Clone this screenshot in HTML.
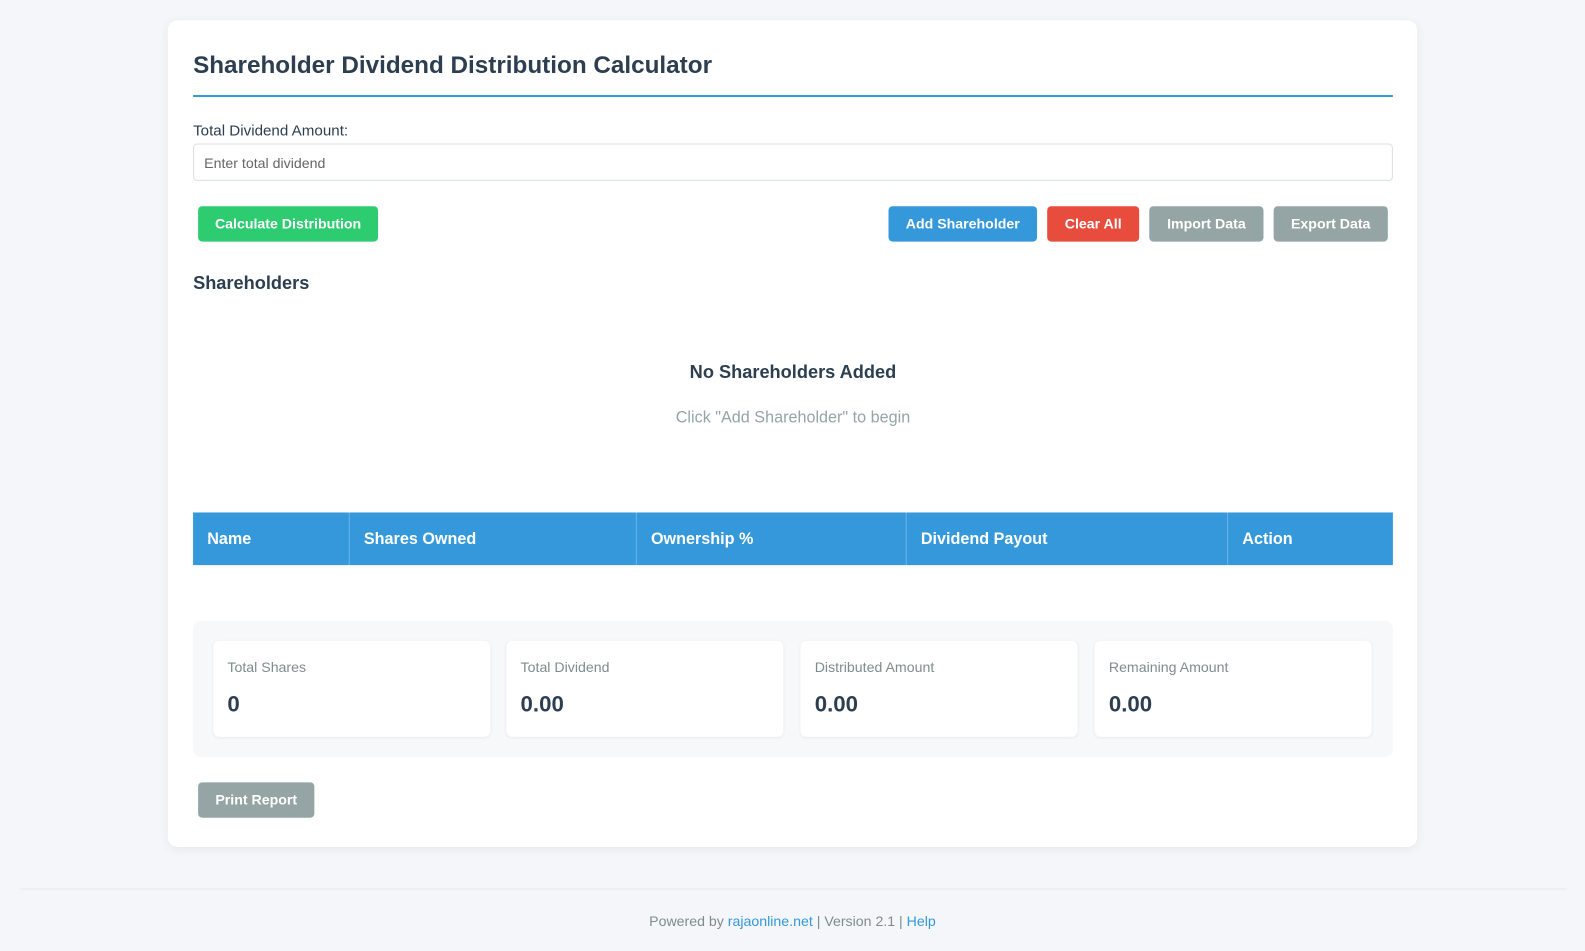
<!DOCTYPE html>
<html><head><meta charset="utf-8"><style>
*{box-sizing:border-box;margin:0;padding:0}
html,body{width:1585px;height:951px;background:#f4f6f9;overflow:hidden}
body{font-family:"Liberation Sans",sans-serif;color:#2c3e50;position:relative}
#w{position:absolute;left:0;top:0;width:1568px;height:941px;transform:scale(1.0108);transform-origin:0 0}
.a{position:absolute}
.card{left:166px;top:20px;width:1236px;height:818px;background:#fff;border-radius:10px;box-shadow:0 2px 10px rgba(0,0,0,.06)}
.btn{position:absolute;top:204px;height:35px;border-radius:4px;color:#fff;font-weight:bold;font-size:14px;text-align:center;line-height:35px}
.th{position:absolute;top:0;height:52px;line-height:54px;color:#fff;font-weight:bold;font-size:16px;padding-left:14px;border-right:1px solid #6fb3e6}
.sc{position:absolute;top:634px;width:274px;height:95px;background:#fff;border-radius:6px;box-shadow:0 1px 3px rgba(0,0,0,.06)}
.sc .l{position:absolute;left:14px;top:18px;font-size:14px;color:#7f8c8d}
.sc .v{position:absolute;left:14px;top:50px;font-size:22px;font-weight:bold;color:#2c3e50}
</style></head><body><div id="w">
<div class="a card"></div>
<div class="a" style="left:191px;top:51px;font-size:24px;font-weight:bold">Shareholder Dividend Distribution Calculator</div>
<div class="a" style="left:191px;top:94px;width:1187px;height:2px;background:#3498db"></div>
<div class="a" style="left:191px;top:121px;font-size:15px">Total Dividend Amount:</div>
<div class="a" style="left:191px;top:142px;width:1187px;height:37px;border:1px solid #dcdfe3;border-radius:4px;font-size:14px;color:#666;padding:10px 0 0 10px">Enter total dividend</div>
<div class="btn" style="left:196px;width:178px;background:#2ecc71">Calculate Distribution</div>
<div class="btn" style="left:879px;width:147px;background:#3498db">Add Shareholder</div>
<div class="btn" style="left:1036px;width:91px;background:#e74c3c">Clear All</div>
<div class="btn" style="left:1137px;width:113px;background:#95a5a6">Import Data</div>
<div class="btn" style="left:1260px;width:113px;background:#95a5a6">Export Data</div>
<div class="a" style="left:191px;top:270px;font-size:18px;font-weight:bold">Shareholders</div>
<div class="a" style="left:191px;top:358px;width:1187px;text-align:center;font-size:18px;font-weight:bold">No Shareholders Added</div>
<div class="a" style="left:191px;top:405px;width:1187px;text-align:center;font-size:16px;color:#95a5a6">Click "Add Shareholder" to begin</div>
<div class="a" style="left:191px;top:507px;width:1187px;height:52px;background:#3498db;box-shadow:0 2px 3px rgba(0,0,0,.06)">
<div class="th" style="left:0;width:155px">Name</div>
<div class="th" style="left:155px;width:284px">Shares Owned</div>
<div class="th" style="left:439px;width:267px">Ownership %</div>
<div class="th" style="left:706px;width:318px">Dividend Payout</div>
<div class="th" style="left:1024px;width:163px;border-right:0">Action</div>
</div>
<div class="a" style="left:191px;top:614px;width:1187px;height:135px;background:#f7f8fa;border-radius:8px"></div>
<div class="sc" style="left:211px"><div class="l">Total Shares</div><div class="v">0</div></div>
<div class="sc" style="left:501px"><div class="l">Total Dividend</div><div class="v">0.00</div></div>
<div class="sc" style="left:792px"><div class="l">Distributed Amount</div><div class="v">0.00</div></div>
<div class="sc" style="left:1083px"><div class="l">Remaining Amount</div><div class="v">0.00</div></div>
<div class="btn" style="left:196px;top:774px;width:115px;background:#95a5a6">Print Report</div>
<div class="a" style="left:20px;top:879px;width:1530px;height:1px;background:#e6e8eb"></div>
<div class="a" style="left:0;top:903px;width:1568px;text-align:center;font-size:14px;color:#7f8c8d">Powered by <span style="color:#3498db">rajaonline.net</span> | Version 2.1 | <span style="color:#3498db">Help</span></div>
</div></body></html>
